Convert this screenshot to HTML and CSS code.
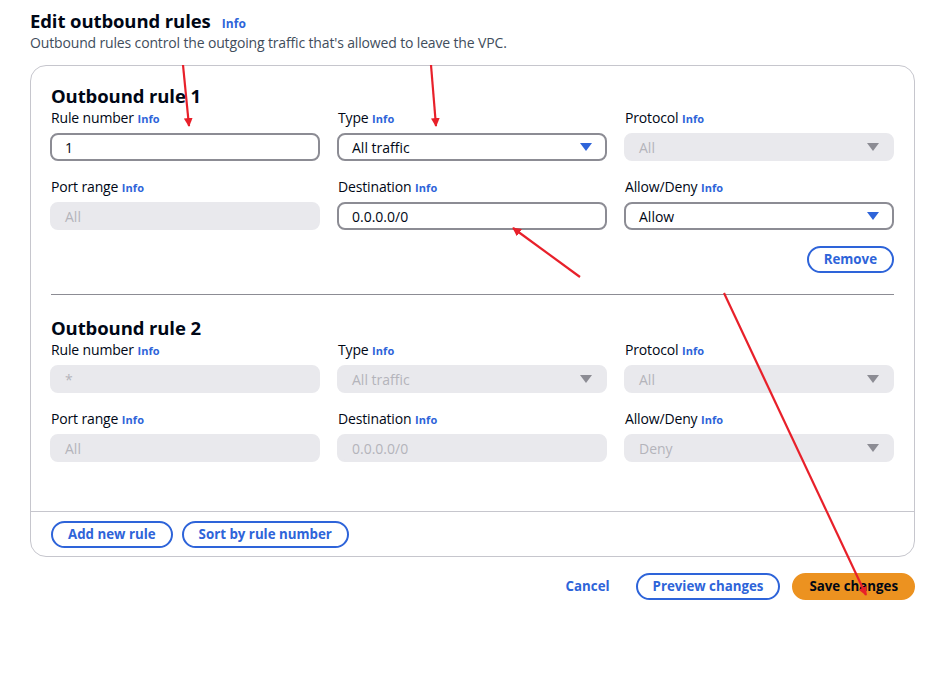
FILE: index.html
```html
<!DOCTYPE html>
<html lang="en">
<head>
<meta charset="utf-8">
<title>Edit outbound rules</title>
<link rel="stylesheet" href="styles.css">
</head>
<body>
<div class="page">
  <header class="page-header">
    <h1 class="title">Edit outbound rules <a class="info info-title">Info</a></h1>
    <p class="subtitle">Outbound rules control the outgoing traffic that's allowed to leave the VPC.</p>
  </header>

  <section class="card">
    <div class="card-body">
      <div class="rule">
        <h2 class="rule-title">Outbound rule 1</h2>
        <div class="grid">
          <div class="field">
            <label class="label">Rule number <a class="info">Info</a></label>
            <div class="input">1</div>
          </div>
          <div class="field">
            <label class="label">Type <a class="info">Info</a></label>
            <div class="input select">All traffic <span class="caret"></span></div>
          </div>
          <div class="field">
            <label class="label">Protocol <a class="info">Info</a></label>
            <div class="input select disabled">All <span class="caret"></span></div>
          </div>
          <div class="field">
            <label class="label">Port range <a class="info">Info</a></label>
            <div class="input disabled">All</div>
          </div>
          <div class="field">
            <label class="label">Destination <a class="info">Info</a></label>
            <div class="input">0.0.0.0/0</div>
          </div>
          <div class="field">
            <label class="label">Allow/Deny <a class="info">Info</a></label>
            <div class="input select">Allow <span class="caret"></span></div>
          </div>
        </div>
        <div class="rule-actions">
          <button class="btn">Remove</button>
        </div>
      </div>

      <hr class="divider">

      <div class="rule rule-2">
        <h2 class="rule-title">Outbound rule 2</h2>
        <div class="grid">
          <div class="field">
            <label class="label">Rule number <a class="info">Info</a></label>
            <div class="input disabled">*</div>
          </div>
          <div class="field">
            <label class="label">Type <a class="info">Info</a></label>
            <div class="input select disabled">All traffic <span class="caret"></span></div>
          </div>
          <div class="field">
            <label class="label">Protocol <a class="info">Info</a></label>
            <div class="input select disabled">All <span class="caret"></span></div>
          </div>
          <div class="field">
            <label class="label">Port range <a class="info">Info</a></label>
            <div class="input disabled">All</div>
          </div>
          <div class="field">
            <label class="label">Destination <a class="info">Info</a></label>
            <div class="input disabled">0.0.0.0/0</div>
          </div>
          <div class="field">
            <label class="label">Allow/Deny <a class="info">Info</a></label>
            <div class="input select disabled">Deny <span class="caret"></span></div>
          </div>
        </div>
      </div>
    </div>
    <div class="card-footer">
      <button class="btn">Add new rule</button>
      <button class="btn">Sort by rule number</button>
    </div>
  </section>

  <div class="page-actions">
    <button class="btn btn-link">Cancel</button>
    <button class="btn">Preview changes</button>
    <button class="btn btn-primary">Save changes</button>
  </div>
</div>

<svg class="annotations" width="931" height="681" viewBox="0 0 931 681" aria-hidden="true">
  <defs>
    <marker id="ah" viewBox="0 0 10 10" refX="9" refY="5" markerWidth="4" markerHeight="4" orient="auto" markerUnits="strokeWidth">
      <path d="M0,0 L10,5 L0,10 Z" fill="#e8202a"/>
    </marker>
  </defs>
  <g stroke="#e8202a" stroke-width="2.2" fill="none" marker-end="url(#ah)">
    <line x1="183" y1="65" x2="189" y2="126"/>
    <line x1="431" y1="65" x2="436" y2="126"/>
    <line x1="580" y1="277" x2="513" y2="228"/>
    <line x1="724" y1="293" x2="866" y2="595"/>
  </g>
</svg>
</body>
</html>
```

FILE: styles.css
```css
* { box-sizing: border-box; }

html, body {
  margin: 0;
  padding: 0;
  background: #ffffff;
}

body {
  font-family: "Open Sans", "Noto Sans", Arial, sans-serif;
  color: #000716;
  font-size: 14px;
  position: relative;
  width: 931px;
  height: 681px;
  overflow: hidden;
}

.page {
  padding: 8px 16px 0 30px;
}

.title {
  margin: 0;
  height: 24px;
  display: flex;
  align-items: baseline;
  font-size: 18.5px;
  line-height: 25px;
  font-weight: 700;
  letter-spacing: -0.1px;
}

.info {
  color: #2e64d9;
  font-size: 11px;
  font-weight: 700;
  text-decoration: none;
  letter-spacing: 0.1px;
}

.info-title {
  margin-left: 11px;
  font-size: 12px;
}

.subtitle {
  margin: 0;
  height: 21px;
  font-size: 14px;
  line-height: 21px;
  color: #414d5c;
  letter-spacing: -0.15px;
}

.card {
  margin-top: 12px;
  border: 1px solid #c6c6cd;
  border-radius: 16px;
  overflow: hidden;
}

.card-body {
  padding: 19px 20px 49px 19px;
}

.rule-title {
  margin: 0 0 1px 1px;
  font-size: 18.5px;
  line-height: 22px;
  font-weight: 700;
  letter-spacing: -0.1px;
}

.grid {
  display: grid;
  grid-template-columns: 1fr 1fr 1fr;
  column-gap: 17px;
  row-gap: 16px;
}

.field {
  display: flex;
  flex-direction: column;
  gap: 4px;
}

.label {
  font-size: 14px;
  line-height: 20px;
  letter-spacing: -0.15px;
  padding-left: 1px;
}

.input {
  height: 28px;
  border: 2px solid #8c8c94;
  border-radius: 8px;
  padding: 0 13px;
  display: flex;
  align-items: center;
  font-size: 14px;
  letter-spacing: 0;
  position: relative;
}

.input.disabled {
  background: #e9e9ed;
  border-color: #e9e9ed;
  color: #b4b4bb;
}

.caret {
  position: absolute;
  right: 13px;
  top: 50%;
  margin-top: -4px;
  width: 0;
  height: 0;
  border-left: 6px solid transparent;
  border-right: 6px solid transparent;
  border-top: 8px solid #2e64d9;
}

.disabled .caret {
  border-top-color: #8c8c94;
}

.rule-actions {
  display: flex;
  justify-content: flex-end;
  margin-top: 16px;
}

.divider {
  margin: 21px 0 0 1px;
  border: 0;
  border-top: 1px solid #8c8c94;
}

.rule-2 {
  margin-top: 22px;
}

.btn {
  font-family: inherit;
  font-size: 13.3px;
  font-weight: 700;
  color: #2e64d9;
  background: #ffffff;
  border: 2px solid #2e64d9;
  border-radius: 20px;
  height: 27px;
  padding: 0 15px;
  line-height: 1;
  cursor: pointer;
  letter-spacing: 0;
}

.card-footer {
  border-top: 1px solid #c6c6cd;
  padding: 9px 20px 8px 20px;
  display: flex;
  gap: 9px;
}

.page-actions {
  margin-top: 16px;
  display: flex;
  justify-content: flex-end;
  align-items: center;
  gap: 12px;
}

.btn-link {
  border-color: transparent;
  background: transparent;
  padding: 0 12px;
}

.btn-primary {
  background: #ec9220;
  border-color: #ec9220;
  color: #000716;
}

.annotations {
  position: absolute;
  left: 0;
  top: 0;
  pointer-events: none;
}
```
